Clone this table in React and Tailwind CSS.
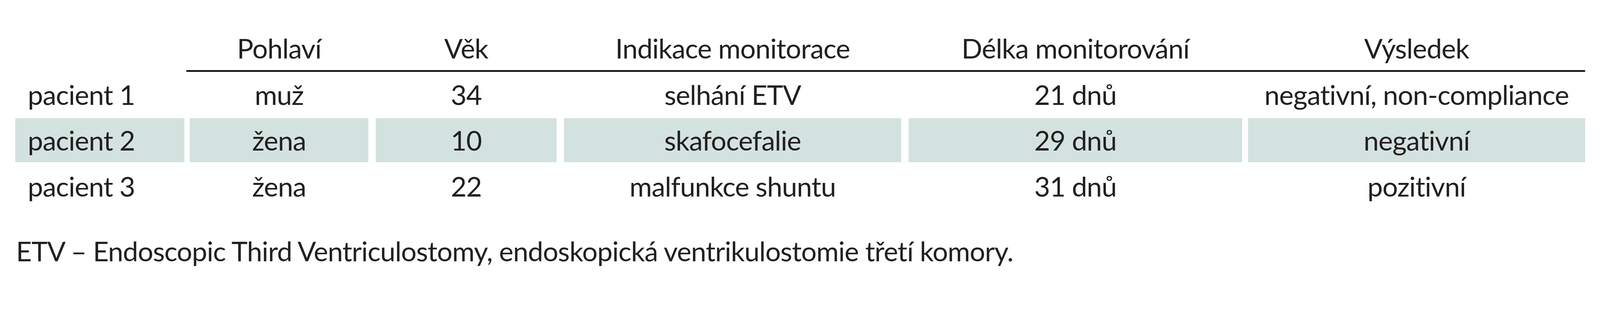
const columns = [
  { title: "", cell: "ml-[39px] w-[433px] pl-[32px] text-left" },
  { title: "Pohlaví", cell: "ml-[14px] w-[457px] text-center" },
  { title: "Věk", cell: "ml-[19px] w-[463px] text-center" },
  { title: "Indikace monitorace", cell: "ml-[19px] w-[863px] text-center" },
  { title: "Délka monitorování", cell: "ml-[19px] w-[854px] text-center" },
  { title: "Výsledek", cell: "ml-[15px] w-[863px] text-center" },
];

const rows = [
  ["pacient 1", "muž", "34", "selhání ETV", "21 dnů", "negativní, non-compliance"],
  ["pacient 2", "žena", "10", "skafocefalie", "29 dnů", "negativní"],
  ["pacient 3", "žena", "22", "malfunkce shuntu", "31 dnů", "pozitivní"],
];

const Row = ({ values, shaded, className = "" }) => (
  <div className={`flex h-[113px] ${className}`}>
    {values.map((value, i) => (
      <div
        key={i}
        className={`${columns[i].cell} shrink-0 whitespace-nowrap ${
          shaded ? "bg-[#d3e2df]" : ""
        }`}
      >
        {value}
      </div>
    ))}
  </div>
);

export default function App() {
  return (
    <div className="w-full h-[717px] overflow-hidden bg-white pt-[67px] text-[#231f20] font-['Lato','Liberation_Sans',sans-serif] text-[70px] leading-[113px] tracking-[-1px]">
      {/* hlavička tabulky */}
      <Row values={columns.map((c) => c.title)} />
      <div className="ml-[477px] w-[3581px] h-[3.5px] bg-black" />

      <Row values={rows[0]} className="mt-[2px]" />
      <Row values={rows[1]} shaded className="mt-[4px]" />
      <Row values={rows[2]} className="mt-[5px]" />

      <p className="mt-[53px] pl-[41px] whitespace-nowrap">
        ETV – Endoscopic Third Ventriculostomy, endoskopická ventrikulostomie třetí komory.
      </p>
    </div>
  );
}
